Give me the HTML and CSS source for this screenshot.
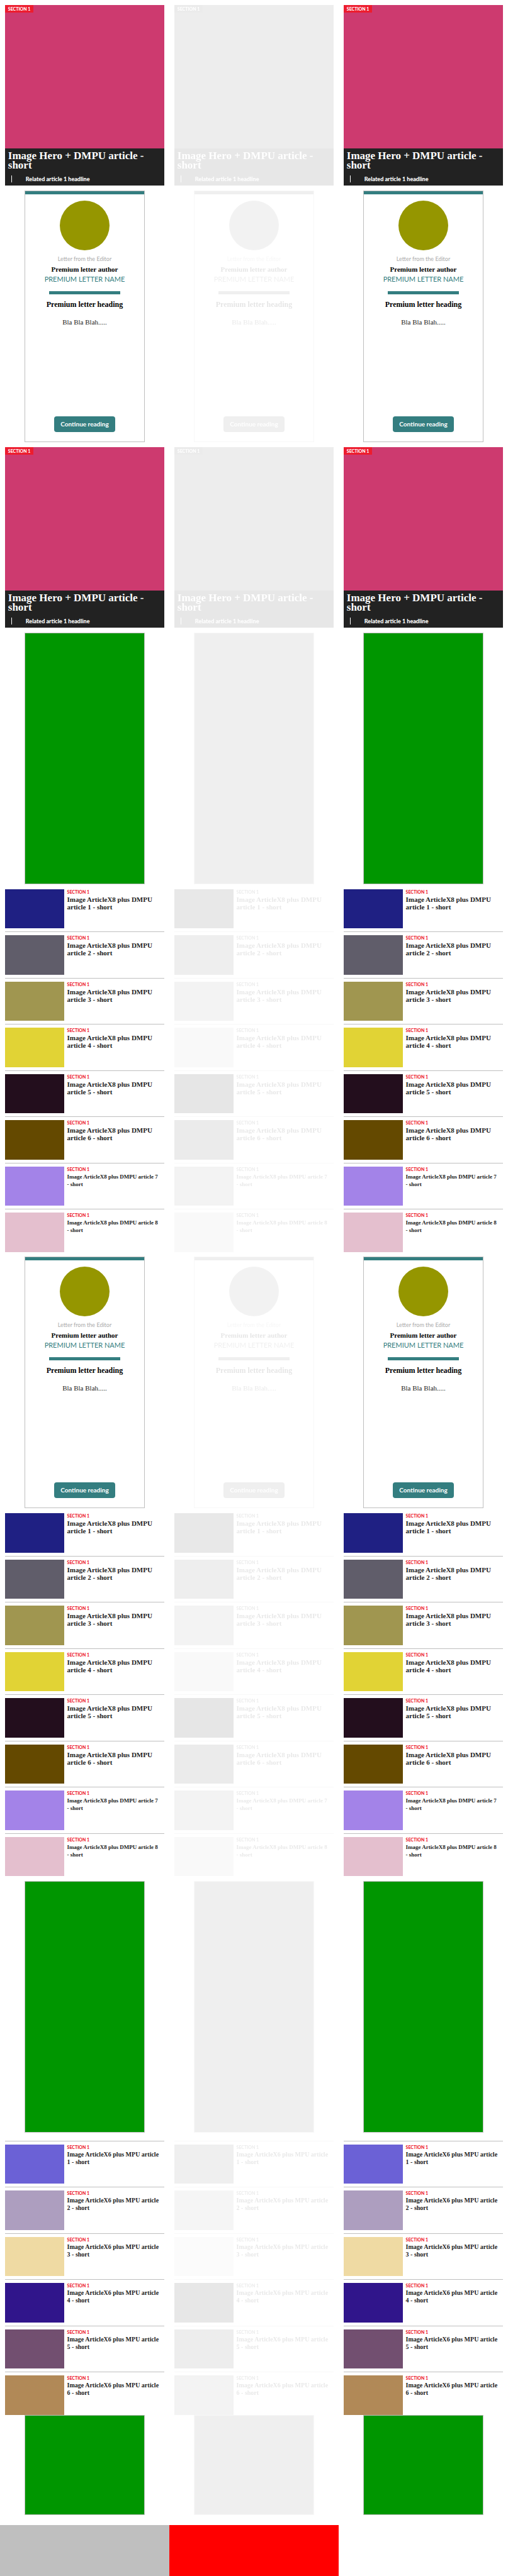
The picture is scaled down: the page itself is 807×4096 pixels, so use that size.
FILE: index.html
```html
<!DOCTYPE html>
<html lang="en">
<head>
<meta charset="utf-8">
<title>Article slices</title>
<link rel="stylesheet" href="styles.css">
</head>
<body>
<main class="columns"></main>
<footer class="footer"><div class="footer-grey"></div><div class="footer-red"></div><div></div></footer>

<template id="hero">
  <article class="hero">
    <div class="hero-image"><span class="badge">SECTION 1</span></div>
    <div class="hero-text">
      <h2 class="hero-title">Image Hero + DMPU article - short</h2>
      <div class="related"><a class="related-link" href="#">Related article 1 headline</a></div>
    </div>
  </article>
</template>

<template id="letter">
  <section class="letter">
    <div class="portrait"></div>
    <p class="letter-label">Letter from the Editor</p>
    <p class="letter-author">Premium letter author</p>
    <p class="letter-name">PREMIUM LETTER NAME</p>
    <div class="letter-rule"></div>
    <h3 class="letter-heading">Premium letter heading</h3>
    <p class="letter-copy">Bla Bla Blah.....</p>
    <button class="letter-button" type="button">Continue reading</button>
  </section>
</template>

<template id="ad"><div class="ad"></div></template>
<template id="ad-short"><div class="ad ad-short"></div></template>

<template id="eight">
  <ul class="list">
    <li class="item"><div class="thumb navy"></div><div class="info"><p class="section">SECTION 1</p><h3 class="headline">Image ArticleX8 plus DMPU article 1 - short</h3></div></li>
    <li class="item"><div class="thumb slate"></div><div class="info"><p class="section">SECTION 1</p><h3 class="headline">Image ArticleX8 plus DMPU article 2 - short</h3></div></li>
    <li class="item"><div class="thumb olive"></div><div class="info"><p class="section">SECTION 1</p><h3 class="headline">Image ArticleX8 plus DMPU article 3 - short</h3></div></li>
    <li class="item"><div class="thumb yellow"></div><div class="info"><p class="section">SECTION 1</p><h3 class="headline">Image ArticleX8 plus DMPU article 4 - short</h3></div></li>
    <li class="item"><div class="thumb plum"></div><div class="info"><p class="section">SECTION 1</p><h3 class="headline">Image ArticleX8 plus DMPU article 5 - short</h3></div></li>
    <li class="item"><div class="thumb brown"></div><div class="info"><p class="section">SECTION 1</p><h3 class="headline">Image ArticleX8 plus DMPU article 6 - short</h3></div></li>
    <li class="item"><div class="thumb violet"></div><div class="info"><p class="section">SECTION 1</p><h3 class="headline headline-small">Image ArticleX8 plus DMPU article 7<br>- short</h3></div></li>
    <li class="item"><div class="thumb rose"></div><div class="info"><p class="section">SECTION 1</p><h3 class="headline headline-small">Image ArticleX8 plus DMPU article 8<br>- short</h3></div></li>
  </ul>
</template>

<template id="six">
  <ul class="list list-ruled">
    <li class="item"><div class="thumb iris"></div><div class="info"><p class="section">SECTION 1</p><h3 class="headline">Image ArticleX6 plus MPU article<br>1 - short</h3></div></li>
    <li class="item"><div class="thumb lilac"></div><div class="info"><p class="section">SECTION 1</p><h3 class="headline">Image ArticleX6 plus MPU article<br>2 - short</h3></div></li>
    <li class="item"><div class="thumb sand"></div><div class="info"><p class="section">SECTION 1</p><h3 class="headline">Image ArticleX6 plus MPU article<br>3 - short</h3></div></li>
    <li class="item"><div class="thumb indigo"></div><div class="info"><p class="section">SECTION 1</p><h3 class="headline">Image ArticleX6 plus MPU article<br>4 - short</h3></div></li>
    <li class="item"><div class="thumb mauve"></div><div class="info"><p class="section">SECTION 1</p><h3 class="headline">Image ArticleX6 plus MPU article<br>5 - short</h3></div></li>
    <li class="item"><div class="thumb tan"></div><div class="info"><p class="section">SECTION 1</p><h3 class="headline">Image ArticleX6 plus MPU article<br>6 - short</h3></div></li>
  </ul>
</template>
<script src="script.js"></script>
</body>
</html>
```
FILE: script.js
```js
// Fills each edition column with the same sequence of slices.
const slices = ["hero", "letter", "hero", "ad", "eight", "letter", "eight", "ad", "six", "ad-short"];
const main = document.querySelector(".columns");

["column", "column column-faded", "column"].forEach((className) => {
  const column = document.createElement("div");
  column.className = className;
  slices.forEach((id) => {
    column.append(document.getElementById(id).content.cloneNode(true));
  });
  main.append(column);
});
```
FILE: styles.css
```css
* { box-sizing: border-box; }

body {
  display: flex;
  flex-direction: column;
  min-height: 100vh;
  margin: 0;
  background: #fff;
  color: #222;
  font-family: Lato, "Noto Sans", sans-serif;
}

h2, h3, p, ul { margin: 0; padding: 0; }

.columns, .footer {
  display: grid;
  grid-template-columns: repeat(3, minmax(0, 1fr));
}

.column { padding: 0 2.9%; }
.column-faded { filter: grayscale(1); opacity: 0.1; }

/* Slices are spaced in proportion to the column width. */
.hero, .letter, .ad, .list { margin-top: 3%; }

.hero-image {
  aspect-ratio: 401 / 362;
  background: #cd3a6f;
  display: flex;
  align-items: flex-start;
}
.badge {
  padding: 0 5px;
  background: #ed1c2e;
  color: #fff;
  font-size: 7px;
  font-weight: 900;
  line-height: 12px;
}
.hero-text { padding: 4px 5px 5px; background: #222; color: #fff; }
.hero-title {
  font-family: "Liberation Serif", serif;
  font-size: 17px;
  line-height: 15px;
}
.related {
  margin: 9px 0 0 5px;
  padding-left: 22px;
  border-left: 1px solid #fff;
  line-height: 11px;
}
.related-link {
  display: block;
  color: #fff;
  font-size: 9px;
  font-weight: 900;
  text-decoration: none;
}

.letter {
  display: flex;
  flex-direction: column;
  align-items: center;
  width: 75%;
  min-height: 400px;
  margin-inline: auto;
  padding-bottom: 15px;
  border: 1px solid #bfbfbf;
  text-align: center;
  line-height: 16px;
}
.letter::before {
  content: "";
  align-self: stretch;
  height: 5px;
  background: #347e80;
}
.portrait {
  width: 79px;
  height: 79px;
  margin: 10px 0 6px;
  border-radius: 50%;
  background: #959600;
}
.letter-label { color: #aaa; font-size: 9px; }
.letter-author, .letter-heading {
  color: #000;
  font-family: "Liberation Serif", serif;
  font-size: 11px;
  font-weight: 700;
}
.letter-heading { font-size: 12px; }
.letter-name { color: #347e80; font-size: 11px; }
.letter-rule { width: 60%; height: 5px; margin: 11px 0 8px; background: #347e80; }
.letter-copy { margin-top: 12px; font-family: "Liberation Serif", serif; font-size: 11px; }
.letter-button {
  margin-top: auto;
  padding: 0 10px;
  border: 0;
  border-radius: 4px;
  background: #347e80;
  color: #fff;
  font: 700 10px/25px Lato, "Noto Sans", sans-serif;
}

.ad {
  width: 75%;
  aspect-ratio: 300 / 632;
  margin-inline: auto;
  border: 1px solid #bfbfbf;
  background: #009600;
}
.ad-short { aspect-ratio: 300 / 252; margin-top: 0; }

.list { list-style: none; }
.item { display: flex; gap: 5px; }
.item + .item, .list-ruled .item { padding-top: 5px; border-top: 1px solid #bfbfbf; }
.item + .item { margin-top: 5px; }
.list-ruled { margin-top: 5%; }
.thumb { flex: none; width: 37%; aspect-ratio: 3 / 2; }
.section { color: #ed1c2e; font-size: 7px; font-weight: 900; line-height: 9px; }
.headline {
  margin-top: 1px;
  font-family: "Liberation Serif", serif;
  font-size: 11px;
  line-height: 12px;
}
.list-ruled .headline { font-size: 10px; }
.headline-small { font-size: 9px; }

.navy { background: #1f2083; }
.slate { background: #605d6a; }
.olive { background: #a09650; }
.yellow { background: #e1d335; }
.plum { background: #230e1d; }
.brown { background: #644900; }
.violet { background: #a383e8; }
.rose { background: #e4bfce; }
.iris { background: #6b61d6; }
.lilac { background: #ad9ebf; }
.sand { background: #efdaa3; }
.indigo { background: #30158b; }
.mauve { background: #724f70; }
.tan { background: #b18957; }

.footer { flex: 1; margin-top: 16px; min-height: 80px; }
.footer-grey { background: #bfbfbf; }
.footer-red { background: #f00; }
```
